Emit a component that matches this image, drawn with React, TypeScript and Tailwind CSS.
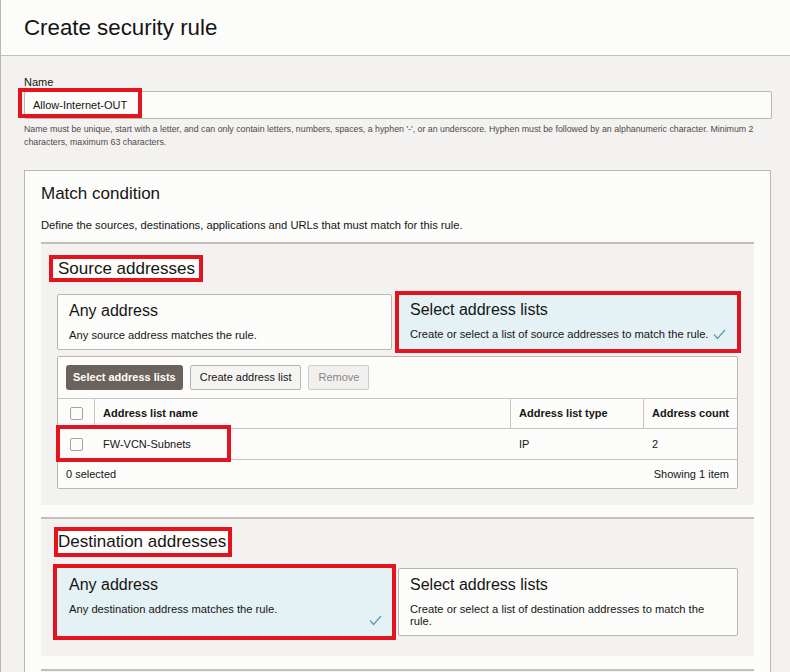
import React from 'react';

const Check: React.FC = () => (
  <svg width="13" height="11" viewBox="0 0 13 11" className="shrink-0">
    <polyline points="1,5.5 4.5,9.5 12,1" fill="none" stroke="#5a9bb4" strokeWidth="1.2" />
  </svg>
);

const Box: React.FC = () => (
  <div className="w-[13px] h-[13px] rounded-[2px] border border-[#a7a29d] bg-[#fcfcfb]"></div>
);

const App: React.FC = () => {
  return (
    <div className="min-h-screen bg-[#f3f2f1] border-l border-[#bcb6b1] font-['Liberation_Sans',Arial,sans-serif] text-[#161513]">
      {/* header */}
      <div className="h-[56px] bg-[#fcfcfb] border-b border-[#c3beb9] pl-[23px] pt-[15px]">
        <h1 className="text-[22.3px] leading-[26px]">Create security rule</h1>
      </div>

      <div className="pl-[23px] pr-[18px] pt-[20px]">
        {/* name field */}
        <div className="text-[11px] leading-[13px] mb-[2px]">Name</div>
        <div className="relative">
          <div className="h-[28px] border border-[#bcb6b1] rounded-[2px] bg-[#fcfcfb] pl-[8px] flex items-center text-[11px]">
            Allow-Internet-OUT
          </div>
          <div className="absolute left-[-6px] top-[-3px] w-[124px] h-[30px] border-[4px] border-[#e4141e]"></div>
        </div>
        <p className="mt-[4px] text-[8.8px] leading-[13px] text-[#4f4a46]">
          Name must be unique, start with a letter, and can only contain letters, numbers, spaces, a hyphen '-', or an underscore. Hyphen must be followed by an alphanumeric character. Minimum 2 characters, maximum 63 characters.
        </p>

        {/* match condition panel */}
        <div className="mt-[21px] mr-[1px] border border-[#bcb6b1] bg-[#fcfcfb] px-4 pt-[13px]">
          <h2 className="text-[17px] leading-[20px]">Match condition</h2>
          <p className="mt-[14px] text-[11.2px] leading-[14px]">
            Define the sources, destinations, applications and URLs that must match for this rule.
          </p>

          {/* source addresses */}
          <div className="mt-[10px] border-t-2 border-[#c4beb9] bg-[#f3f2f1] px-4 pt-[11px] pb-4">
            <div className="ml-[-8px] inline-block border-[4px] border-[#e4141e] bg-[#fcfcfb] pl-[5px] pr-[4px] text-[17px] leading-[19px]">
              Source addresses
            </div>
            <div className="mt-[12px] grid grid-cols-[335px_1fr] gap-[6px]">
              <div className="h-[56px] border border-[#bcb6b1] rounded-[2px] bg-[#fcfcfb] px-[11px] pt-[7px]">
                <div className="text-[16px] leading-[18px]">Any address</div>
                <div className="mt-[8px] text-[11.2px] leading-[14px]">Any source address matches the rule.</div>
              </div>
              <div className="relative h-[56px] bg-[#e4f1f5] px-[12px] pt-[7px]">
                <div className="text-[16px] leading-[18px]">Select address lists</div>
                <div className="mt-[8px] flex items-center gap-[5px] text-[11.2px] leading-[14px]">
                  <span className="whitespace-nowrap">Create or select a list of source addresses to match the rule.</span>
                  <Check />
                </div>
                <div className="absolute -inset-[3px] border-[4px] border-[#e4141e]"></div>
              </div>
            </div>

            {/* address table */}
            <div className="mt-[6px] border border-[#bcb6b1] rounded-[2px] bg-[#fcfcfb] text-[11px]">
              <div className="flex gap-[7px] p-2">
                <div className="h-[25px] px-[7px] flex items-center rounded-[3px] bg-[#6b625d] text-white font-bold">
                  Select address lists
                </div>
                <div className="h-[25px] px-[9px] flex items-center rounded-[2px] border border-[#b8b3ae] bg-[#f5f4f2]">
                  Create address list
                </div>
                <div className="h-[25px] px-[9px] flex items-center rounded-[2px] border border-[#cfcac5] bg-[#f1f0ee] text-[#8a857f]">
                  Remove
                </div>
              </div>
              <div className="grid grid-cols-[37px_416px_133px_1fr] border-t border-[#c9c4bf] h-[30px] font-bold">
                <div className="flex items-center justify-center border-r border-[#c9c4bf]"><Box /></div>
                <div className="flex items-center pl-[8px] border-r border-[#c9c4bf]">Address list name</div>
                <div className="flex items-center pl-[8px] border-r border-[#c9c4bf]">Address list type</div>
                <div className="flex items-center pl-[8px]">Address count</div>
              </div>
              <div className="relative grid grid-cols-[37px_416px_133px_1fr] border-t border-[#c9c4bf] h-[31px]">
                <div className="flex items-center justify-center"><Box /></div>
                <div className="flex items-center pl-[8px]">FW-VCN-Subnets</div>
                <div className="flex items-center pl-[8px]">IP</div>
                <div className="flex items-center pl-[8px]">2</div>
                <div className="absolute left-[-2px] top-[-4px] w-[175px] h-[37px] border-[4px] border-[#e4141e]"></div>
              </div>
              <div className="flex items-center justify-between border-t border-[#c9c4bf] h-[29px] px-[8px]">
                <span>0 selected</span>
                <span>Showing 1 item</span>
              </div>
            </div>
          </div>

          {/* destination addresses */}
          <div className="mt-[12px] border-t-2 border-[#c4beb9] bg-[#f3f2f1] px-4 pt-[8px] pb-[20px]">
            <div className="ml-[-3px] inline-block border-[4px] border-[#e4141e] bg-[#fcfcfb] pl-0 pr-[2px] text-[17px] leading-[22px]">
              Destination addresses
            </div>
            <div className="mt-[11px] grid grid-cols-[335px_1fr] gap-[6px]">
              <div className="relative h-[68px] bg-[#e4f1f5] px-[12px] pt-[8px]">
                <div className="text-[16px] leading-[18px]">Any address</div>
                <div className="mt-[9px] text-[11.2px] leading-[12px]">Any destination address matches the rule.</div>
                <div className="absolute right-[10px] bottom-[10px]"><Check /></div>
                <div className="absolute -inset-[4px] border-[4px] border-[#e4141e]"></div>
              </div>
              <div className="h-[68px] border border-[#bcb6b1] rounded-[2px] bg-[#fcfcfb] px-[11px] pt-[7px]">
                <div className="text-[16px] leading-[18px]">Select address lists</div>
                <div className="mt-[9px] max-w-[300px] text-[11.2px] leading-[12px]">
                  Create or select a list of destination addresses to match the rule.
                </div>
              </div>
            </div>
          </div>

          <div className="mt-[13px] border-t-2 border-[#c4beb9] bg-[#f3f2f1] h-[40px]"></div>
        </div>
      </div>
    </div>
  );
};

export default App;
